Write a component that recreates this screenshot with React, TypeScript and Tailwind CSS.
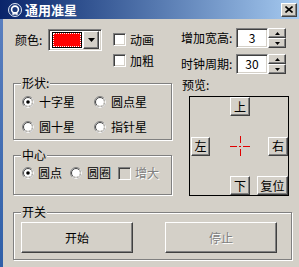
const face = "bg-[#d4d0c8]";
const raised =
  "border border-t-white border-l-white border-r-[#404040] border-b-[#404040] shadow-[inset_-1px_-1px_0_#808080] bg-[#d4d0c8]";
const sunken =
  "border border-t-[#808080] border-l-[#808080] border-r-white border-b-white shadow-[inset_1px_1px_0_#404040,inset_-1px_-1px_0_#d4d0c8]";
const font = { fontFamily: '"Noto Sans CJK SC", "Noto Sans", sans-serif' };

function Radio({ checked }: { checked?: boolean }) {
  return (
    <svg width="12" height="12" viewBox="0 0 12 12" className="shrink-0">
      <circle cx="6" cy="6" r="5.5" fill="#fff" stroke="#808080" />
      <path d="M2.11 9.89 A5.5 5.5 0 0 0 9.89 2.11" fill="none" stroke="#fff" />
      <circle cx="6" cy="6" r="4.5" fill="none" stroke="#404040" />
      <path d="M2.82 9.18 A4.5 4.5 0 0 0 9.18 2.82" fill="none" stroke="#d4d0c8" />
      {checked && <circle cx="6" cy="6" r="1.8" fill="#000" />}
    </svg>
  );
}

function Check({ disabled }: { disabled?: boolean }) {
  return <div className={`h-[13px] w-[13px] shrink-0 ${sunken} ${disabled ? face : "bg-white"}`} />;
}

function Group({ title, className, children }: { title: string; className: string; children: React.ReactNode }) {
  return (
    <div
      className={`relative border border-[#808080] shadow-[inset_1px_1px_0_#fff,1px_1px_0_#fff] ${className}`}
    >
      <span className="absolute -top-[8px] left-[7px] bg-[#d4d0c8] px-[1px] text-[12px] leading-[14px] text-black">
        {title}
      </span>
      {children}
    </div>
  );
}

function Btn({ label, className }: { label: string; className: string }) {
  return (
    <div className={`flex items-center justify-center text-[12px] leading-[14px] text-black ${raised} ${className}`}>
      {label}
    </div>
  );
}

function Spin({ label, value, className }: { label: string; value: string; className: string }) {
  return (
    <div className={`flex h-[20px] items-center ${className}`}>
      <span className="w-[56px] pl-[1px] text-[12px] leading-[14px] text-black">{label}</span>
      <div className={`flex h-[20px] w-[32px] items-center justify-center bg-white text-[12px] text-black ${sunken}`}>
        {value}
      </div>
      <div className="flex h-[20px] w-[18px] flex-col">
        <div className={`flex h-[10px] items-center justify-center ${raised}`}>
          <svg width="5" height="3" viewBox="0 0 5 3">
            <path d="M2.5 0 L5 3 L0 3 Z" fill="#000" />
          </svg>
        </div>
        <div className={`flex h-[10px] items-center justify-center ${raised}`}>
          <svg width="5" height="3" viewBox="0 0 5 3">
            <path d="M0 0 L5 0 L2.5 3 Z" fill="#000" />
          </svg>
        </div>
      </div>
    </div>
  );
}

function Crosshair() {
  return (
    <svg width="20" height="20" viewBox="0 0 20 20">
      <g stroke="#e00000" strokeWidth="1">
        <path d="M0 10.5 H7 M9 10.5 H11 M13 10.5 H20" />
        <path d="M10.5 0 V7 M10.5 13 V20" />
      </g>
    </svg>
  );
}

export default function App() {
  return (
    <div className={`flex h-[267px] w-[299px] flex-col overflow-hidden ${face}`} style={font}>
      {/* title bar */}
      <div className="flex h-[19px] shrink-0 items-center bg-gradient-to-r from-[#0a246a] to-[#a6caf0] pl-[8px] pr-[2px]">
        <svg width="14" height="14" viewBox="0 0 14 14" className="shrink-0">
          <circle cx="7" cy="7" r="6.5" fill="#1c3a7c" stroke="#dfe6f2" />
          <circle cx="7" cy="6.5" r="3.4" fill="none" stroke="#fff" strokeWidth="1.6" />
          <path d="M4.2 11 H6 V9 M9.8 11 H8 V9" fill="none" stroke="#fff" strokeWidth="1.4" />
        </svg>
        <span className="ml-[3px] text-[13px] font-bold leading-[15px] tracking-[0px] text-white">通用准星</span>
        <div className={`ml-auto flex h-[14px] w-[16px] items-center justify-center ${raised}`}>
          <svg width="8" height="7" viewBox="0 0 8 7">
            <path d="M0.5 0.5 L7.5 6.5 M7.5 0.5 L0.5 6.5" stroke="#000" strokeWidth="1.6" />
          </svg>
        </div>
      </div>

      <div className="flex flex-1">
        <div className="w-[3px] shrink-0 bg-gradient-to-b from-[#5a7fbf] to-[#2f5fa8]" />
        <div className="flex flex-1 flex-col pl-[10px]">
          <div className="flex">
            {/* left column */}
            <div className="flex w-[159px] flex-col">
              <div className="mt-[10px] flex h-[42px]">
                <div className="flex h-[22px] items-center">
                  <span className="ml-[2px] w-[33px] text-[12px] leading-[14px] text-black">颜色:</span>
                  <div className={`flex h-[22px] w-[54px] items-center gap-[1px] bg-white pl-[3px] ${sunken}`}>
                    <div className="h-[16px] w-[31px] border border-black bg-[#ff0000] p-0">
                      <div className="h-full w-full border border-dotted border-white" />
                    </div>
                    <div className={`ml-auto mr-[2px] flex h-[18px] w-[16px] items-center justify-center ${raised}`}>
                      <svg width="7" height="4" viewBox="0 0 7 4">
                        <path d="M0 0 H7 L3.5 4 Z" fill="#000" />
                      </svg>
                    </div>
                  </div>
                </div>
                <div className="ml-[11px] flex flex-col">
                  <div className="flex h-[21px] items-center gap-[4px]">
                    <Check />
                    <span className="text-[12px] leading-[14px] text-black">动画</span>
                  </div>
                  <div className="flex h-[21px] items-center gap-[4px]">
                    <Check />
                    <span className="text-[12px] leading-[14px] text-black">加粗</span>
                  </div>
                </div>
              </div>

              <Group title="形状:" className="mt-[12px] h-[57px] px-[8px] pb-[2px] pt-[8px]">
                <div className="grid grid-cols-[72px_1fr] gap-y-[5px]">
                  {[
                    ["十字星", true],
                    ["圆点星", false],
                    ["圆十星", false],
                    ["指针星", false],
                  ].map(([t, c]) => (
                    <div key={t as string} className="flex h-[20px] items-center gap-[5px]">
                      <Radio checked={c as boolean} />
                      <span className="text-[12px] leading-[14px] text-black">{t as string}</span>
                    </div>
                  ))}
                </div>
              </Group>

              <Group title="中心" className="mt-[15px] h-[40px] px-[8px] pt-[7px]">
                <div className="flex h-[20px] items-center">
                  <Radio checked />
                  <span className="ml-[4px] text-[12px] leading-[14px] text-black">圆点</span>
                  <span className="ml-[8px]">
                    <Radio />
                  </span>
                  <span className="ml-[5px] text-[12px] leading-[14px] text-black">圆圈</span>
                  <span className="ml-[7px]">
                    <Check disabled />
                  </span>
                  <span className="ml-[4px] text-[12px] leading-[14px] text-[#808080] [text-shadow:1px_1px_0_#fff]">
                    增大
                  </span>
                </div>
              </Group>
            </div>

            {/* right column */}
            <div className="ml-[8px] flex flex-1 flex-col">
              <Spin label="增加宽高:" value="3" className="mt-[9px]" />
              <Spin label="时钟周期:" value="30" className="mt-[6px]" />
              <span className="ml-[2px] mt-[4px] h-[14px] text-[12px] leading-[14px] text-black">预览:</span>
              <div className="ml-[9px] mt-[4px] flex h-[100px] w-[100px] flex-col justify-between border border-black">
                <div className="flex pl-[40px]">
                  <Btn label="上" className="h-[19px] w-[20px]" />
                </div>
                <div className="flex items-center pl-[1px]">
                  <Btn label="左" className="h-[19px] w-[19px]" />
                  <div className="flex flex-1 justify-center pl-[2px]">
                    <Crosshair />
                  </div>
                  <Btn label="右" className="h-[19px] w-[20px]" />
                </div>
                <div className="flex pl-[40px]">
                  <Btn label="下" className="h-[19px] w-[20px]" />
                  <Btn label="复位" className="ml-auto h-[19px] w-[31px]" />
                </div>
              </div>
            </div>
          </div>

          <Group title="开关" className="mt-[16px] h-[48px] w-[279px] pl-[7px] pt-[9px]">
            <div className="flex gap-[32px]">
              <Btn label="开始" className="h-[31px] w-[112px]" />
              <div
                className={`flex h-[31px] w-[112px] items-center justify-center text-[12px] leading-[14px] text-[#808080] [text-shadow:1px_1px_0_#fff] ${raised}`}
              >
                停止
              </div>
            </div>
          </Group>
        </div>
      </div>
    </div>
  );
}
